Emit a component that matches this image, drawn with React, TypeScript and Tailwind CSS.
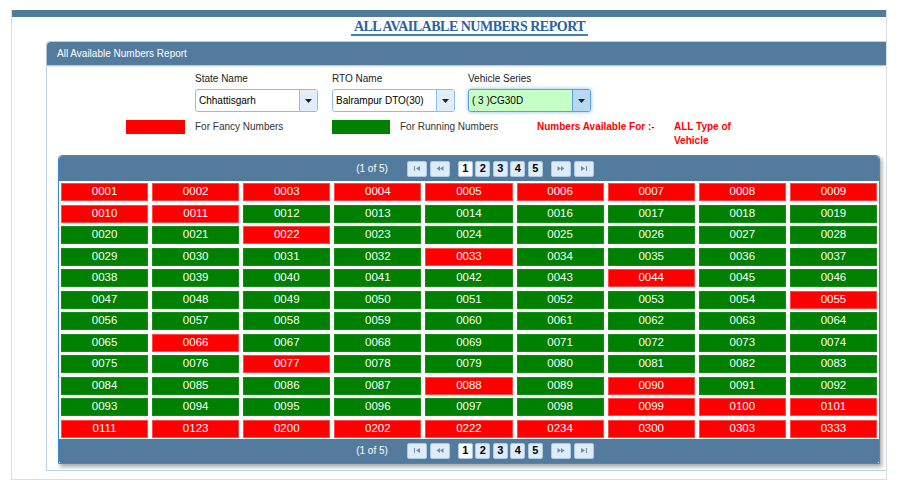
import React from "react";

const pad = (n: number) => String(n).padStart(4, "0");
const range = (a: number, b: number) => {
  const out: number[] = [];
  for (let i = a; i <= b; i++) out.push(i);
  return out;
};

const numbers: number[] = [
  ...range(1, 9),
  10, 11, 12, 13, 14, 16, 17, 18, 19,
  ...range(20, 64),
  65, 66, 67, 68, 69, 71, 72, 73, 74,
  ...range(75, 101),
  111, 123, 200, 202, 222, 234, 300, 303, 333,
];

const red = new Set<number>([
  ...range(1, 11), 22, 33, 44, 55, 66, 77, 88, 90, 99, 100, 101,
  111, 123, 200, 202, 222, 234, 300, 303, 333,
]);

function Tri() {
  return (
    <svg width="7" height="4" viewBox="0 0 7 4">
      <polygon points="0,0 7,0 3.5,4" fill="#222" />
    </svg>
  );
}

function SelectBox({ value, active }: { value: string; active?: boolean }) {
  return (
    <div
      className={
        active
          ? "flex h-[23px] w-[123px] overflow-hidden rounded-[3px] border border-[#5f9fd6] bg-[#c6ffc6] shadow-[0_0_4px_#8dbde9]"
          : "flex h-[23px] w-[123px] overflow-hidden rounded-[3px] border border-[#8dbfe3] bg-white"
      }
    >
      <div className="flex flex-1 items-center pl-[3px] text-[10px] text-black">{value}</div>
      <div
        className={
          active
            ? "flex w-[18px] items-center justify-center border-l border-[#5f9fd6] bg-[#b7d8f2]"
            : "flex w-[18px] items-center justify-center border-l border-[#8dbfe3] bg-[#e1eef9]"
        }
      >
        <Tri />
      </div>
    </div>
  );
}

function NavIcon({ kind }: { kind: "first" | "prev" | "next" | "last" }) {
  const c = "#6f8fae";
  return (
    <svg width="8" height="5" viewBox="0 0 8 5">
      {kind === "first" && (
        <>
          <rect x="1" y="0" width="1" height="5" fill={c} />
          <polygon points="7,0 7,5 3,2.5" fill={c} />
        </>
      )}
      {kind === "prev" && (
        <>
          <polygon points="4,0 4,5 0.5,2.5" fill={c} />
          <polygon points="7.5,0 7.5,5 4,2.5" fill={c} />
        </>
      )}
      {kind === "next" && (
        <>
          <polygon points="0.5,0 0.5,5 4,2.5" fill={c} />
          <polygon points="4,0 4,5 7.5,2.5" fill={c} />
        </>
      )}
      {kind === "last" && (
        <>
          <polygon points="1,0 1,5 5,2.5" fill={c} />
          <rect x="6" y="0" width="1" height="5" fill={c} />
        </>
      )}
    </svg>
  );
}

function NavBtn({ kind }: { kind: "first" | "prev" | "next" | "last" }) {
  return (
    <div className="flex h-[16px] w-[20px] items-center justify-center rounded-[2px] border border-[#a9cbe6] bg-[#dfecf8]">
      <NavIcon kind={kind} />
    </div>
  );
}

function PageBtn({ n, active }: { n: number; active?: boolean }) {
  return (
    <div
      className={
        active
          ? "flex h-[16px] w-[15px] items-center justify-center rounded-[2px] border border-[#a9cbe6] bg-white text-[11px] font-bold text-black"
          : "flex h-[16px] w-[15px] items-center justify-center rounded-[2px] border border-[#a9cbe6] bg-[#dfecf8] text-[11px] font-bold text-black"
      }
    >
      {n}
    </div>
  );
}

function Pager({ top }: { top?: boolean }) {
  return (
    <div
      className={
        top
          ? "flex h-[25px] items-center justify-center rounded-t-[4px] bg-[#527b9e] pl-[12px]"
          : "flex h-[24px] items-center justify-center rounded-b-[2px] bg-[#527b9e] pl-[12px]"
      }
    >
      <span className="text-[10px] text-white">(1 of 5)</span>
      <div className="ml-[19px] flex gap-[3px]">
        <NavBtn kind="first" />
        <NavBtn kind="prev" />
      </div>
      <div className="ml-[8px] flex gap-[2.5px]">
        <PageBtn n={1} active />
        <PageBtn n={2} />
        <PageBtn n={3} />
        <PageBtn n={4} />
        <PageBtn n={5} />
      </div>
      <div className="ml-[8px] flex gap-[3px]">
        <NavBtn kind="next" />
        <NavBtn kind="last" />
      </div>
    </div>
  );
}

export default function App() {
  return (
    <div
      className="h-[483px] w-[907px] overflow-hidden bg-white pl-[11px] pt-[10px]"
      style={{ fontFamily: '"Liberation Sans", Arial, sans-serif' }}
    >
      <div className="w-[876px] overflow-hidden border-x border-b border-[#dddddd] pb-[8px]">
        <div className="h-[7px] bg-[#527b9e]" />
        <div className="mt-[3px] flex justify-center pl-[41px]">
          <span
            className="inline-block border-b-2 border-[#3f7fc0] px-[3px] text-[14px] font-bold leading-[14px] tracking-[-0.5px] text-[#2b61a0]"
            style={{ fontFamily: '"Liberation Serif", "Times New Roman", serif' }}
          >
            ALL AVAILABLE NUMBERS REPORT
          </span>
        </div>

        <div className="ml-[34px] mt-[5px] rounded-tl-[4px] border-y border-l border-[#b8d6ec] pb-[6px]">
          <div className="flex h-[23px] items-center rounded-tl-[4px] bg-[#527b9e] pl-[10px] text-[10px] text-white shadow-[0_1px_2px_rgba(0,0,0,0.3)]">
            All Available Numbers Report
          </div>

          <div className="mt-[8px] flex pl-[148px] text-[10px] text-[#222]">
            <div className="w-[137px]">
              <div className="leading-[12px]">State Name</div>
              <div className="mt-[4px]">
                <SelectBox value="Chhattisgarh" />
              </div>
            </div>
            <div className="w-[136px]">
              <div className="leading-[12px]">RTO Name</div>
              <div className="mt-[4px]">
                <SelectBox value="Balrampur DTO(30)" />
              </div>
            </div>
            <div className="w-[137px]">
              <div className="leading-[12px]">Vehicle Series</div>
              <div className="mt-[4px]">
                <SelectBox value="( 3 )CG30D" active />
              </div>
            </div>
          </div>

          <div className="mt-[8px] flex items-start pl-[79px] text-[10px] leading-[14px]">
            <div className="h-[14px] w-[59px] bg-[#ff0000]" />
            <div className="ml-[10px] w-[137px] text-[#333]">For Fancy Numbers</div>
            <div className="h-[14px] w-[58px] bg-[#008000]" />
            <div className="ml-[10px] w-[137px] text-[#333]">For Running Numbers</div>
            <div className="w-[137px] font-bold text-[#ff0000]">Numbers Available For :-</div>
            <div className="w-[72px] font-bold text-[#ff0000]">ALL Type of Vehicle</div>
          </div>

          <div className="ml-[11px] mr-[6px] mt-[7px] rounded-t-[4px] border border-[#3a8ccb] bg-white shadow-[2px_3px_4px_rgba(0,0,0,0.35)]">
            <Pager top />
            <div className="grid grid-cols-9 gap-x-[4px] gap-y-[3.5px] px-[2px] pb-[1px] pt-[2px]">
              {numbers.map((n) => (
                <div
                  key={n}
                  className={
                    red.has(n)
                      ? "flex h-[18px] items-center justify-center border border-[#ff4a4a] bg-[#ff0000] text-[11.5px] text-white"
                      : "flex h-[18px] items-center justify-center border border-[#1a8a1a] bg-[#008000] text-[11.5px] text-white"
                  }
                >
                  {pad(n)}
                </div>
              ))}
            </div>
            <Pager />
          </div>
        </div>
      </div>
    </div>
  );
}
